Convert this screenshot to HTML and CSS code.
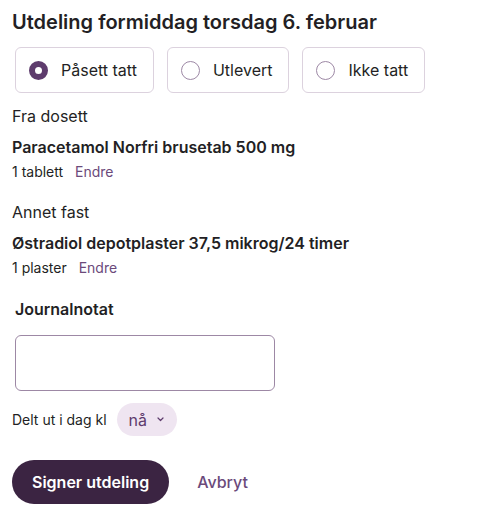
FILE: index.html
```
<!DOCTYPE html>
<html lang="no">
<head>
    <meta charset="UTF-8">
    <meta name="viewport" content="width=device-width, initial-scale=1.0">
    <title>Utdeling</title>
    <link rel="stylesheet" href="styles.css">
</head>
<body>
    <div class="dispense">
        <h1>Utdeling formiddag torsdag 6. februar</h1>

        <div class="choices">
            <label class="choice">
                <span class="radio checked"></span>
                Påsett tatt
            </label>
            <label class="choice">
                <span class="radio"></span>
                Utlevert
            </label>
            <label class="choice">
                <span class="radio"></span>
                Ikke tatt
            </label>
        </div>

        <div class="group">
            <div class="group-title">Fra dosett</div>
            <div class="med-name">Paracetamol Norfri brusetab 500 mg</div>
            <div class="med-dose">1 tablett <a href="#" class="link">Endre</a></div>
        </div>

        <div class="group">
            <div class="group-title">Annet fast</div>
            <div class="med-name">Østradiol depotplaster 37,5 mikrog/24 timer</div>
            <div class="med-dose">1 plaster <a href="#" class="link">Endre</a></div>
        </div>

        <div class="note">
            <div class="note-label">Journalnotat</div>
            <textarea class="note-input"></textarea>
        </div>

        <div class="time-row">
            <span>Delt ut i dag kl</span>
            <button class="time-pill">nå
                <svg width="7" height="5" viewBox="0 0 7 5"><path d="M1 1l2.5 2.5L6 1" fill="none" stroke="#5e3c6d" stroke-width="1.2" stroke-linecap="round" stroke-linejoin="round"/></svg>
            </button>
        </div>

        <div class="actions">
            <button class="sign-button">Signer utdeling</button>
            <a href="#" class="cancel">Avbryt</a>
        </div>
    </div>
</body>
</html>
```

FILE: styles.css
```
* {
    margin: 0;
    padding: 0;
    box-sizing: border-box;
}

body {
    font-family: Inter, 'Noto Sans', sans-serif;
    background-color: #ffffff;
    color: #231f24;
}

.dispense {
    padding: 8px 12px;
}

h1 {
    font-size: 20px;
    line-height: 28px;
    font-weight: 600;
    margin-bottom: 11px;
}

.choices {
    display: flex;
    gap: 13px;
    margin-left: 3px;
}

.choice {
    display: flex;
    align-items: center;
    gap: 13px;
    height: 46px;
    padding: 0 16px 0 13px;
    border: 1px solid #dcd2de;
    border-radius: 6px;
    font-size: 16px;
    line-height: 24px;
}

.radio {
    width: 19px;
    height: 19px;
    border-radius: 50%;
    border: 1px solid #9d88a5;
}

.radio.checked {
    border: 6px solid #5e3c6d;
}

.group {
    margin-top: 11px;
}

.group + .group {
    margin-top: 18px;
}

.group-title {
    font-size: 16px;
    line-height: 24px;
}

.med-name {
    margin-top: 7px;
    font-size: 16px;
    line-height: 24px;
    font-weight: 600;
}

.med-dose {
    margin-top: 3px;
    font-size: 14px;
    line-height: 20px;
}

.link {
    color: #6b4a7b;
    text-decoration: none;
    margin-left: 8px;
}

.note {
    margin-top: 19px;
    margin-left: 3px;
}

.note-label {
    font-size: 16px;
    line-height: 24px;
    font-weight: 600;
}

.note-input {
    display: block;
    margin-top: 14px;
    width: 260px;
    height: 56px;
    border: 1px solid #9d88a5;
    border-radius: 6px;
    resize: none;
}

.time-row {
    display: flex;
    align-items: center;
    gap: 10px;
    margin-top: 12px;
    font-size: 14px;
}

.time-pill {
    display: flex;
    align-items: center;
    gap: 10px;
    height: 33px;
    padding: 0 13px 0 12px;
    border: none;
    border-radius: 17px;
    background-color: #efe5f1;
    color: #5e3c6d;
    font-family: inherit;
    font-size: 16px;
}

.actions {
    display: flex;
    align-items: center;
    gap: 28px;
    margin-top: 24px;
}

.sign-button {
    height: 44px;
    padding: 0 20px;
    border: none;
    border-radius: 22px;
    background-color: #3b2442;
    color: #ffffff;
    font-family: inherit;
    font-size: 16px;
    font-weight: 600;
}

.cancel {
    color: #6b4a7b;
    font-size: 16px;
    font-weight: 500;
    text-decoration: none;
}
```
